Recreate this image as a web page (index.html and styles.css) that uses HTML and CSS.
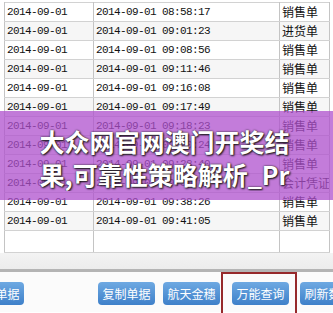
FILE: index.html
```html
<!DOCTYPE html>
<html>
    <head>
        <meta charset="UTF-8">
        <meta name="viewport" content="width=device-width, initial-scale=1.0">
        <title>单据查询</title>
        <link rel="stylesheet" href="styles.css">
    </head>
    <body>
        <div class="screen">
            <table class="grid">
                <tr><td class="c1">2014-09-01</td><td class="c2">2014-09-01 08:58:17</td><td class="c3">销售单</td></tr>
                <tr><td class="c1">2014-09-01</td><td class="c2">2014-09-01 09:01:23</td><td class="c3">进货单</td></tr>
                <tr><td class="c1">2014-09-01</td><td class="c2">2014-09-01 09:08:56</td><td class="c3">销售单</td></tr>
                <tr><td class="c1">2014-09-01</td><td class="c2">2014-09-01 09:11:46</td><td class="c3">销售单</td></tr>
                <tr><td class="c1">2014-09-01</td><td class="c2">2014-09-01 09:16:08</td><td class="c3">销售单</td></tr>
                <tr><td class="c1">2014-09-01</td><td class="c2">2014-09-01 09:17:49</td><td class="c3">销售单</td></tr>
                <tr><td class="c1">2014-09-01</td><td class="c2">2014-09-01 09:18:23</td><td class="c3">销售单</td></tr>
                <tr><td class="c1">2014-09-01</td><td class="c2">2014-09-01 09:20:24</td><td class="c3">销售单</td></tr>
                <tr><td class="c1">2014-09-01</td><td class="c2">2014-09-01 09:28:40</td><td class="c3">销售单</td></tr>
                <tr><td class="c1">2014-09-01</td><td class="c2">2014-09-01 09:30:11</td><td class="c3">会计凭证</td></tr>
                <tr><td class="c1">2014-09-01</td><td class="c2">2014-09-01 09:38:26</td><td class="c3">销售单</td></tr>
                <tr><td class="c1">2014-09-01</td><td class="c2">2014-09-01 09:41:05</td><td class="c3">销售单</td></tr>
                <tr class="blank"><td class="c1"></td><td class="c2"></td><td class="c3"></td></tr>
            </table>
            <div class="shade"></div>
            <div class="toolbar">
                <button class="btn b1">新增单据</button>
                <button class="btn b2">复制单据</button>
                <button class="btn b3">航天金穗</button>
                <button class="btn b4">万能查询</button>
                <button class="btn b5">刷新数据</button>
            </div>
            <div class="focus"></div>
            <div class="banner">
                <p>大众网官网澳门开奖结果,可靠性策略解析_Pro版</p>
            </div>
        </div>
    </body>
</html>
```

FILE: styles.css
```css
html, body {
    margin: 0;
    padding: 0;
}
body {
    width: 333px;
    height: 313px;
    overflow: hidden;
    background-color: #fff;
}
.screen {
    position: relative;
    width: 333px;
    height: 313px;
    overflow: hidden;
    padding-top: 2px;
    box-sizing: border-box;
}
.grid {
    margin-left: 4px;
    width: 326px;
    border-collapse: collapse;
    table-layout: fixed;
    border-top: 1px solid #d2d2d2;
}
.grid td {
    height: 18px;
    padding: 0 0 0 2px;
    border-bottom: 1px solid #d2d2d2;
    border-left: 1px solid #c4c4c4;
    border-right: 1px solid #c4c4c4;
    white-space: nowrap;
    overflow: hidden;
    color: #111;
    line-height: 18px;
}
.grid tr:nth-child(even) td {
    background-color: #f6f6f6;
}
.grid .c1 {
    width: 86px;
}
.grid .c2 {
    width: 183px;
}
.grid .c1,
.grid .c2 {
    font-family: "Liberation Mono", monospace;
    font-size: 11px;
    letter-spacing: -0.6px;
}
.grid .c3 {
    font-family: "Noto Sans CJK SC", sans-serif;
    font-size: 12px;
}
.grid tr.blank td {
    height: 21px;
    background-color: #fff;
}
.shade {
    height: 16px;
    background: linear-gradient(#f3f3f3, #ececec);
    border-bottom: 3px solid #b4b4b4;
}
.toolbar {
    display: flex;
    padding-top: 10px;
    background-color: #fbfbfb;
    height: 30px;
}
.btn {
    flex: none;
    width: 57px;
    height: 23px;
    padding: 0;
    border: none;
    border-radius: 4px;
    background: linear-gradient(#6ea9e2, #3e80c9);
    color: #fff;
    font-family: "Noto Sans CJK SC", sans-serif;
    font-size: 12px;
    line-height: 23px;
}
.b1 {
    margin-left: -33px;
}
.b2 {
    margin-left: 74px;
}
.b3 {
    margin-left: 8px;
}
.b4 {
    margin-left: 12px;
}
.b5 {
    margin-left: 11px;
}
.focus {
    position: absolute;
    left: 221px;
    top: 272px;
    width: 72px;
    height: 60px;
    border: 2px solid #96292b;
}
.banner {
    position: absolute;
    left: 0;
    top: 111px;
    width: 333px;
    height: 89px;
    background-color: rgba(175, 80, 205, 0.75);
}
.banner p {
    width: 254px;
    height: 66px;
    margin: 14px auto 0;
    overflow: hidden;
    word-break: break-all;
    font-family: "Noto Sans CJK SC", sans-serif;
    font-size: 25px;
    font-weight: bold;
    line-height: 33px;
    color: #fff;
    text-shadow: 0 0 2px #222, 1px 1px 2px #111;
}
```
